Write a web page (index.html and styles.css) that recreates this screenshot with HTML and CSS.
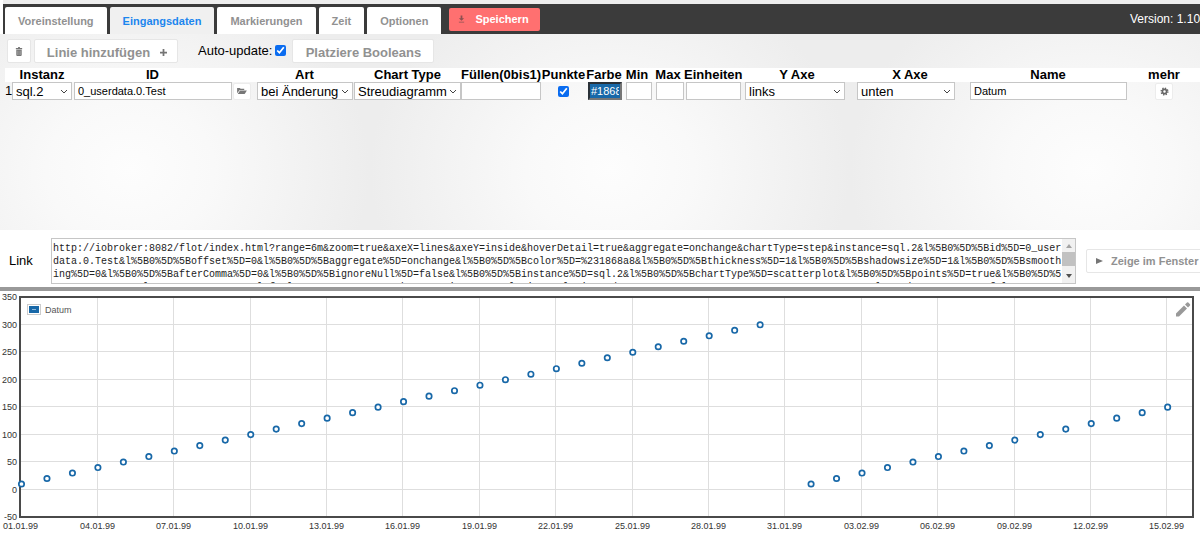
FILE: index.html
```html
<!DOCTYPE html>
<html lang="de">
<head>
<meta charset="utf-8">
<title>Flot</title>
<link rel="stylesheet" href="styles.css">
</head>
<body>
<header class="bar">
  <nav class="tabs">
    <a class="tab" href="#preset">Voreinstellung</a>
    <a class="tab tab-active" href="#inputs">Eingangsdaten</a>
    <a class="tab" href="#marks">Markierungen</a>
    <a class="tab" href="#time">Zeit</a>
    <a class="tab" href="#options">Optionen</a>
  </nav>
  <button class="save" type="button">
    <svg class="icon-save" viewBox="0 0 8 8" aria-hidden="true"><path d="M3 0h2v3h2L4 6 1 3h2zM1 7h6v1H1z"/></svg>
    <span>Speichern</span>
  </button>
  <span class="version">Version: 1.10</span>
</header>

<main class="inputs">
  <div class="tools">
    <button class="btn btn-trash" type="button" aria-label="Löschen">
      <svg class="icon-trash" viewBox="0 0 8 10" aria-hidden="true"><path d="M3 0h2v1h2.5v1.500h-7V1H3zM1 3h6v6.300l-.7.7H1.700L1 9.300z"/><path class="cut" d="M2.500 4v5M4 4v5M5.500 4v5"/></svg>
    </button>
    <button class="btn btn-add" type="button">
      <span>Linie hinzufügen</span>
      <svg class="icon-plus" viewBox="0 0 8 8" aria-hidden="true"><path d="M3 0h2v3h3v2H5v3H3V5H0V3h3z"/></svg>
    </button>
    <label class="auto">Auto-update: <input class="check" type="checkbox" checked></label>
    <button class="btn btn-bool" type="button">Platziere Booleans</button>
  </div>

  <table class="lines">
    <colgroup>
      <col class="c-num"><col class="c-inst"><col class="c-id"><col class="c-dir"><col class="c-art"><col class="c-type"><col class="c-fill"><col class="c-pts"><col class="c-color"><col class="c-min"><col class="c-max"><col class="c-unit"><col class="c-y"><col class="c-x"><col><col class="c-more">
    </colgroup>
    <thead>
      <tr><th></th><th>Instanz</th><th>ID</th><th></th><th>Art</th><th>Chart Type</th><th>Füllen(0bis1)</th><th>Punkte</th><th>Farbe</th><th>Min</th><th>Max</th><th>Einheiten</th><th>Y Axe</th><th>X Axe</th><th>Name</th><th>mehr</th></tr>
    </thead>
    <tbody>
      <tr>
        <td>1</td>
        <td><select class="field pick" aria-label="Instanz"><option>sql.2</option></select></td>
        <td><input class="field inset" type="text" aria-label="ID" value="0_userdata.0.Test"></td>
        <td><button class="mini" type="button" aria-label="ID wählen"><svg class="icon-dir" viewBox="0 0 11 9" aria-hidden="true"><path d="M0 1h3l1 1h4v1.500H3L0 7z"/><path d="M3.300 4H11L8.500 8H.7z"/></svg></button></td>
        <td><select class="field pick inset" aria-label="Art"><option>bei Änderung</option></select></td>
        <td><select class="field pick" aria-label="Chart Type"><option>Streudiagramm</option></select></td>
        <td><input class="field" type="text" aria-label="Füllen"></td>
        <td class="mid"><input class="check" type="checkbox" aria-label="Punkte" checked></td>
        <td><input class="field color" type="text" aria-label="Farbe" value="#1868a8"></td>
        <td><input class="field gap" type="text" aria-label="Min"></td>
        <td><input class="field gap" type="text" aria-label="Max"></td>
        <td><input class="field inset" type="text" aria-label="Einheiten"></td>
        <td><select class="field pick axis-y" aria-label="Y Axe"><option>links</option></select></td>
        <td><select class="field pick axis-x" aria-label="X Axe"><option>unten</option></select></td>
        <td><input class="field inset" type="text" aria-label="Name" value="Datum"></td>
        <td class="mid"><button class="mini" type="button" aria-label="mehr"><svg class="icon-gear" viewBox="0 0 10 10" aria-hidden="true"><circle class="teeth" cx="5" cy="5" r="3.500"/><circle class="ring" cx="5" cy="5" r="2.300"/></svg></button></td>
      </tr>
    </tbody>
  </table>
</main>

<section class="link">
  <label class="link-label" for="url">Link</label>
  <div class="urlbox">
  <textarea class="url" id="url" spellcheck="false">http://iobroker:8082/flot/index.html?range=6m&amp;zoom=true&amp;axeX=lines&amp;axeY=inside&amp;hoverDetail=true&amp;aggregate=onchange&amp;chartType=step&amp;instance=sql.2&amp;l%5B0%5D%5Bid%5D=0_user
data.0.Test&amp;l%5B0%5D%5Boffset%5D=0&amp;l%5B0%5D%5Baggregate%5D=onchange&amp;l%5B0%5D%5Bcolor%5D=%231868a8&amp;l%5B0%5D%5Bthickness%5D=1&amp;l%5B0%5D%5Bshadowsize%5D=1&amp;l%5B0%5D%5Bsmooth
ing%5D=0&amp;l%5B0%5D%5BafterComma%5D=0&amp;l%5B0%5D%5BignoreNull%5D=false&amp;l%5B0%5D%5Binstance%5D=sql.2&amp;l%5B0%5D%5BchartType%5D=scatterplot&amp;l%5B0%5D%5Bpoints%5D=true&amp;l%5B0%5D%5
Bname%5D=Datum&amp;l%5B0%5D%5Byaxe%5D=left&amp;l%5B0%5D%5Bxaxe%5D=bottom&amp;timeType=relative&amp;relativeEnd=now&amp;aggregateType=count&amp;aggregateSpan=300&amp;legend=nw&amp;useComma=false&amp;zoom=true</textarea>
    <div class="scroll" aria-hidden="true">
      <svg class="arrow arrow-up" viewBox="0 0 6 4"><path d="M0 4l3-4 3 4z"/></svg>
      <div class="thumb"></div>
      <svg class="arrow" viewBox="0 0 6 4"><path d="M0 0l3 4 3-4z"/></svg>
    </div>
  </div>
  <button class="btn btn-open" type="button">
    <svg class="icon-play" viewBox="0 0 7 6" aria-hidden="true"><path d="M0 0l7 3-7 3z"/></svg>
    <span>Zeige im Fenster</span>
  </button>
</section>

<section class="chart">
  <svg class="plot" id="plot" viewBox="0 0 1200 244" role="img" aria-label="Datum"></svg>
</section>
<script src="script.js"></script>
</body>
</html>
```

FILE: styles.css
```css
* {
  box-sizing: border-box;
}

body {
  margin: 0;
  overflow: hidden;
  background: #fff;
  color: #000;
  font-family: "Liberation Sans", Arial, sans-serif;
  font-size: 13px;
}

button {
  font-family: inherit;
  margin: 0;
}

svg {
  display: block;
}

/* header bar */
.bar {
  display: flex;
  align-items: center;
  height: 34px;
  border-top: 4px solid #eee;
  margin-left: 3px;
  background: #3b3b3b;
}

.tabs {
  display: flex;
  align-self: stretch;
  gap: 3px;
  padding: 3px 0 0 2px;
}

.tab {
  display: flex;
  align-items: center;
  padding: 0 13px;
  border-radius: 2px 2px 0 0;
  background: #fff;
  color: #919191;
  font-size: 11px;
  font-weight: bold;
  text-decoration: none;
}

.tab-active {
  background: #f0f0f0;
  color: #1c86ee;
}

.save {
  display: flex;
  align-items: center;
  gap: 10px;
  height: 23px;
  margin-left: 8px;
  padding: 0 11px 0 9px;
  border: 0;
  border-radius: 2px;
  background: #ff7070;
  color: #fff;
  font-size: 11px;
  font-weight: bold;
}

.icon-save {
  width: 7px;
  height: 8px;
  fill: #8c5050;
}

.version {
  width: 70px;
  margin-left: auto;
  color: #fff;
  font-size: 12px;
  white-space: nowrap;
}

/* line settings */
.inputs {
  height: 196px;
  background: #ededed radial-gradient(closest-side, #fdfdfd, #f9f9f9 35%, #ededed) -110px -64px / 480px 400px;
}

.tools {
  display: flex;
  height: 34px;
  padding: 5px 0 0 7px;
}

.btn {
  display: flex;
  align-items: center;
  justify-content: center;
  height: 24px;
  border: 1px solid #e6e6e6;
  border-radius: 2px;
  background: #fff;
  color: #919191;
  font-size: 13px;
  font-weight: bold;
  white-space: nowrap;
}

.btn-trash {
  width: 24px;
  margin-right: 3px;
  padding: 0;
}

.icon-trash {
  width: 8px;
  height: 9px;
  fill: #757575;
}

.cut {
  stroke: #c4c4c4;
  stroke-width: 0.5;
}

.btn-add {
  gap: 10px;
  width: 144px;
  padding: 2px 0 0 2px;
}

.icon-plus {
  width: 7px;
  height: 7px;
  fill: #757575;
}

.auto {
  display: flex;
  align-items: center;
  gap: 3px;
  height: 22px;
  margin: 0 6px 0 20px;
}

.check {
  width: 11px;
  height: 11px;
  margin: 0;
  accent-color: #0a6cf0;
}

.btn-bool {
  width: 142px;
  padding: 2px 0 0;
}

.lines {
  width: calc(100% - 5px);
  margin-left: 5px;
  border-collapse: collapse;
  table-layout: fixed;
}

.lines thead {
  background: #fff;
}

.lines th,
.lines td {
  padding: 0;
  line-height: 14px;
  white-space: nowrap;
}

.c-num { width: 7px; }
.c-inst { width: 60px; }
.c-id { width: 161px; }
.c-dir { width: 22px; }
.c-art { width: 99px; }
.c-type { width: 107px; }
.c-fill { width: 80px; }
.c-pts { width: 45px; }
.c-color { width: 36px; }
.c-min { width: 30px; }
.c-max { width: 32px; }
.c-unit { width: 58px; }
.c-y { width: 110px; }
.c-x { width: 116px; }
.c-more { width: 72px; }

.field {
  display: block;
  width: 100%;
  height: 18px;
  padding: 0 3px;
  border: 1px solid #c6c6c6;
  border-radius: 0;
  background: #fff;
  color: #000;
  font-family: inherit;
  font-size: 11px;
}

.pick {
  appearance: none;
  padding: 0 3px;
  background: #fff url("data:image/svg+xml,%3Csvg xmlns='http://www.w3.org/2000/svg' width='8' height='5'%3E%3Cpath d='M1 1l3 3 3-3' fill='none' stroke='%23444'/%3E%3C/svg%3E") no-repeat right 3px center;
  font-size: 13px;
}

.inset {
  width: calc(100% - 3px);
  margin-left: 2px;
}

.gap {
  width: calc(100% - 4px);
  margin-left: 4px;
}

.color {
  width: 34px;
  margin-left: 2px;
  padding: 0 1px;
  border: 2px solid #2a3138;
  border-right-color: #767676;
  border-bottom-color: #767676;
  background: #1868a8;
  color: #fff;
}

.axis-y {
  width: 100px;
  margin-left: 3px;
}

.axis-x {
  width: 98px;
  margin-left: 5px;
}

.mid .check,
.mid .mini {
  display: flex;
  margin: 0 auto;
}

.mini {
  display: flex;
  align-items: center;
  justify-content: center;
  width: 18px;
  height: 17px;
  padding: 0;
  border: 1px solid #ececec;
  border-radius: 2px;
  background: #fff;
}

.icon-dir {
  width: 10px;
  height: 8px;
  fill: #777;
}

.icon-gear {
  width: 9px;
  height: 9px;
  fill: none;
  stroke: #666;
}

.teeth {
  stroke-width: 2;
  stroke-dasharray: 1.4 1.35;
}

.ring {
  stroke-width: 1.8;
}

/* link row */
.link {
  display: flex;
  align-items: center;
  height: 61px;
  padding-left: 9px;
  border-bottom: 4px solid #999;
  overflow: hidden;
}

.link-label {
  width: 42px;
  padding-top: 4px;
}

.urlbox {
  display: flex;
  flex: 1;
  min-width: 0;
  height: 46px;
  margin: 4px 10px 0 0;
  border: 1px solid #c6c6c6;
}

.url {
  flex: 1;
  min-width: 0;
  padding: 3px 0 0 1px;
  border: 0;
  background: #fff;
  color: #222;
  font-family: "Liberation Mono", "Courier New", monospace;
  font-size: 10px;
  line-height: 13px;
  white-space: pre;
  overflow: hidden;
  resize: none;
}

.scroll {
  display: flex;
  flex-direction: column;
  align-items: center;
  width: 13px;
  padding: 5px 0;
  background: #f1f1f1;
}

.thumb {
  flex: 1;
  align-self: stretch;
  margin: 4px 0 8px;
  background: #c1c1c1;
}

.arrow {
  width: 6px;
  height: 4px;
  fill: #505050;
}

.arrow-up {
  fill: #a3a3a3;
}

.btn-open {
  flex: none;
  justify-content: flex-start;
  gap: 8px;
  width: 124px;
  margin: 4px -10px 0 0;
  padding: 0 0 0 9px;
  font-size: 11px;
}

.icon-play {
  width: 7px;
  height: 6px;
  fill: #757575;
}

/* chart */
.plot {
  width: 100%;
}

.grid {
  stroke: #dedede;
  stroke-width: 1;
}

.frame {
  fill: none;
  stroke: #4a4a4a;
  stroke-width: 2;
}

.tick {
  fill: #333;
  font-size: 9px;
}

.tick-y {
  text-anchor: end;
}

.tick-x {
  text-anchor: middle;
}

.point {
  fill: #fff;
  stroke: #1868a8;
  stroke-width: 1.7;
}

.swatch-edge {
  fill: #fff;
  stroke: #ccc;
}

.swatch {
  fill: #1868a8;
}

.swatch-dash {
  stroke: #8db8dc;
}

.legend {
  fill: #555;
  font-size: 9px;
}

.pencil {
  fill: #999;
}
```

FILE: script.js
```js
const svg = document.getElementById('plot');

function add(name, attrs, text) {
  const el = document.createElementNS('http://www.w3.org/2000/svg', name);
  for (const key in attrs) el.setAttribute(key, attrs[key]);
  if (text !== undefined) el.textContent = text;
  svg.appendChild(el);
}

const left = 20, right = 1193, top_ = 6, bottom = 226;
const xAt = day => left + 0.3 + day * 25.47;
const yAt = value => 198.5 - value * 0.549;
const two = n => String(n).padStart(2, '0');

for (let value = -50; value <= 350; value += 50) {
  const y = Math.round(yAt(value)) - 0.5;
  if (value > -50 && value < 350) add('line', { class: 'grid', x1: left, x2: right, y1: y, y2: y });
  add('text', { class: 'tick tick-y', x: 17, y: y + 3.5 }, value);
}

for (let day = 0; day <= 45; day += 3) {
  const x = Math.round(xAt(day)) + 0.5;
  const label = day < 31 ? two(day + 1) + '.01.99' : two(day - 30) + '.02.99';
  if (day > 0) add('line', { class: 'grid', x1: x, x2: x, y1: top_, y2: bottom });
  add('text', { class: 'tick tick-x', x: x, y: 238 }, label);
}

add('rect', { class: 'frame', x: left, y: top_, width: right - left, height: bottom - top_ });

for (let day = 0; day <= 45; day++) {
  if (day === 30) continue;
  const value = day < 30 ? (day + 1) * 10 : (day - 30) * 10;
  add('circle', { class: 'point', cx: xAt(day) + 1.2, cy: yAt(value), r: 2.7 });
}

add('rect', { class: 'swatch-edge', x: 27.5, y: 13.5, width: 13, height: 10 });
add('rect', { class: 'swatch', x: 29, y: 15, width: 10, height: 7 });
add('line', { class: 'swatch-dash', x1: 32, x2: 36, y1: 18.5, y2: 18.5 });
add('text', { class: 'legend', x: 45, y: 22 }, 'Datum');
add('path', { class: 'pencil', d: 'M1176 22.500V25.500H1179L1187 17.500L1184 14.500ZM1185 13.500L1188 16.500L1190 14.500Q1190.500 14 1190 13.300L1188.300 11.600Q1187.500 11 1187 11.500Z' });
```
